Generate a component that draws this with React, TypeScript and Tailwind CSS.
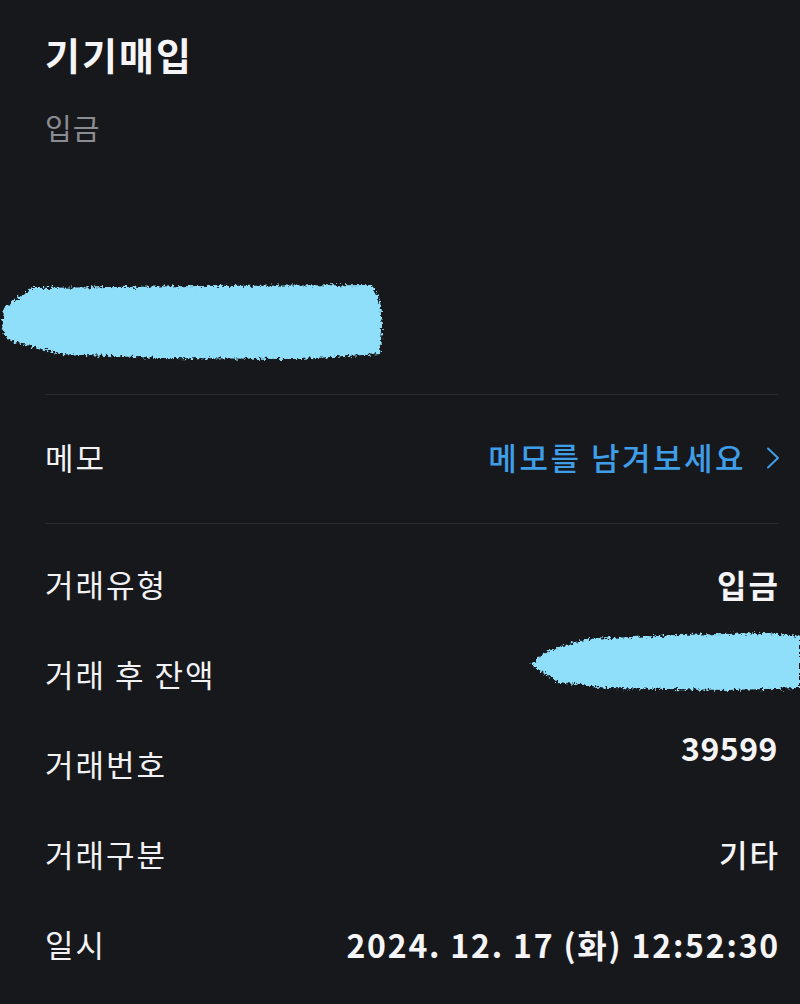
import React from "react";

function Scribble({ w, h, d, id }: { w: number; h: number; d: string; id: string }) {
  return (
    <svg width={w} height={h} viewBox={`0 0 ${w} ${h}`} className="block">
      <defs>
        <filter id={id} x="-5%" y="-20%" width="110%" height="140%">
          <feTurbulence type="fractalNoise" baseFrequency="0.35" numOctaves="3" seed="4" result="n" />
          <feDisplacementMap in="SourceGraphic" in2="n" scale="8" xChannelSelector="R" yChannelSelector="G" />
        </filter>
      </defs>
      <path d={d} fill="#8fdffb" filter={`url(#${id})`} />
    </svg>
  );
}

function Row({ label, children, extra = "" }: { label: string; children: React.ReactNode; extra?: string }) {
  return (
    <div className="flex h-[90px] items-center justify-between">
      <span className="text-[31px] font-normal tracking-[2px] text-[#f2f2f4]">{label}</span>
      <div className={extra}>{children}</div>
    </div>
  );
}

export default function App() {
  return (
    <div
      className="min-h-[1004px] w-[800px] bg-[#17181c] pl-[45px] pr-[22px] text-white"
      style={{ fontFamily: '"Noto Sans CJK KR", "Noto Sans", sans-serif' }}
    >
      <div className="pt-[29px] text-[38px] font-bold leading-[50px] tracking-[2px] text-[#f5f5f7]">기기매입</div>
      <div className="mt-[28px] text-[29px] leading-[40px] tracking-[1px] text-[#8b8c91]">입금</div>
      <div className="-ml-[45px] mt-[135px]">
        <Scribble
          id="s1"
          w={386}
          h={82}
          d="M32 6 L200 4 L372 3 L380 18 L382 45 L380 72 L300 77 L160 76 L60 72 L30 64 L8 58 L2 48 L4 26 L18 16 Z"
        />
      </div>
      <div className="mt-[30px] h-px bg-[#2a2b30]" />
      <div className="flex h-[128px] items-center justify-between">
        <span className="mb-[3px] text-[31px] tracking-[2px] text-[#f2f2f4]">메모</span>
        <div className="mb-[3px] flex items-center gap-[20px]">
          <span className="text-[31px] font-medium tracking-[2.5px] text-[#3f9ee8]">메모를 남겨보세요</span>
          <svg width="14" height="22" viewBox="0 0 14 22" fill="none" className="-mr-[2px]">
            <path d="M2 1.5 L12 11 L2 20.5" stroke="#3f9ee8" strokeWidth="2" strokeLinecap="round" strokeLinejoin="round" />
          </svg>
        </div>
      </div>
      <div className="h-px bg-[#2a2b30]" />
      <div className="pt-[15px]">
        <Row label="거래유형" extra="-mr-[2px]">
          <span className="text-[32px] font-bold tracking-[2px] text-[#f5f5f7]">입금</span>
        </Row>
        <Row label="거래 후 잔액" extra="-mr-[22px] mb-[24px]">
          <Scribble
            id="s2"
            w={272}
            h={64}
            d="M2 34 L22 20 L60 9 L150 5 L240 3 L272 6 L272 58 L200 60 L80 58 L30 52 Z"
          />
        </Row>
        <Row label="거래번호" extra="mb-[34px]">
          <span className="text-[32px] font-bold tracking-[0.5px] text-[#f5f5f7]">39599</span>
        </Row>
        <Row label="거래구분" extra="-mr-[2px]">
          <span className="text-[31px] font-medium tracking-[2px] text-[#f5f5f7]">기타</span>
        </Row>
        <Row label="일시" extra="-mr-[2px]">
          <span className="text-[32px] font-semibold tracking-[1.8px] text-[#f5f5f7]">2024. 12. 17 (화) 12:52:30</span>
        </Row>
      </div>
    </div>
  );
}
